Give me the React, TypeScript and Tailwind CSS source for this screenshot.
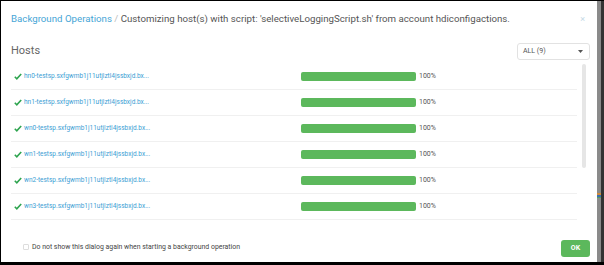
const HOSTS = [
  'hn0-testsp.sxfgwmb1j11utjlztl4jssbxjd.bx...',
  'hn1-testsp.sxfgwmb1j11utjlztl4jssbxjd.bx...',
  'wn0-testsp.sxfgwmb1j11utjlztl4jssbxjd.bx...',
  'wn1-testsp.sxfgwmb1j11utjlztl4jssbxjd.bx...',
  'wn2-testsp.sxfgwmb1j11utjlztl4jssbxjd.bx...',
  'wn3-testsp.sxfgwmb1j11utjlztl4jssbxjd.bx...',
]

function Check() {
  return (
    <svg width="8" height="7" viewBox="0 0 8 7" className="shrink-0">
      <path d="M0.8 3.8 L2.8 5.8 L7.2 1" fill="none" stroke="#2ea44f" strokeWidth="1.6" />
    </svg>
  )
}

function HostRow({ name }: { name: string }) {
  return (
    <div className="h-[26px] flex items-center border-b border-[#f0f0f0]">
      <div className="w-[290px] flex items-center gap-[2px] pl-[3px]">
        <Check />
        <span className="text-[6.5px] text-[#3b9ed4]">{name}</span>
      </div>
      <div className="w-[115px] h-[9px] rounded-[2px] bg-[#5cb85c]" />
      <span className="ml-[3px] text-[7px] text-[#555]">100%</span>
    </div>
  )
}

export default function App() {
  return (
    <div className="w-[604px] h-[265px] bg-black pt-[1px] pl-[1px] pb-[3px] flex font-['Roboto',sans-serif]">
      <div className="flex-1 bg-white flex flex-col pl-[10px] pr-[7px]">
        {/* header */}
        <div className="h-[37px] flex items-center justify-between">
          <div className="text-[9.7px] whitespace-nowrap">
            <span className="text-[#45a5d6]">Background Operations</span>
            <span className="text-[#bbb]"> / </span>
            <span className="text-[#555]">Customizing host(s) with script: 'selectiveLoggingScript.sh' from account hdiconfigactions.</span>
          </div>
          <span className="text-[9px] text-[#c5d9e6] mr-[5px]">×</span>
        </div>

        {/* hosts + filter */}
        <div className="h-[26px] flex items-center justify-between pt-[1px]">
          <span className="text-[11px] text-[#666]">Hosts</span>
          <div className="w-[73px] h-[17px] border border-[#e2e2e2] rounded-[3px] flex items-center justify-between pl-[5px] pr-[6px]">
            <span className="text-[7px] text-[#555]">ALL (9)</span>
            <svg width="5" height="3" viewBox="0 0 5 3">
              <path d="M0 0 L5 0 L2.5 3 Z" fill="#555" />
            </svg>
          </div>
        </div>

        {/* list */}
        <div className="flex">
          <div className="flex-1 flex flex-col">
            {HOSTS.map(h => <HostRow key={h} name={h} />)}
          </div>
          <div className="w-[13px] flex justify-center">
            <div className="w-[4px] h-[104px] rounded-full bg-[#e6e6e6]" />
          </div>
        </div>

        {/* footer */}
        <div className="flex-1 flex items-end justify-between pb-[5px]">
          <div className="flex items-center gap-[3px] pl-[12px] pb-[5px]">
            <div className="w-[6px] h-[6px] border border-[#ddd] rounded-[1px]" />
            <span className="text-[6.9px] text-[#444]">Do not show this dialog again when starting a background operation</span>
          </div>
          <button className="w-[29px] h-[17px] rounded-[3px] bg-[#5cb85c] text-white text-[7px] font-bold">OK</button>
        </div>
      </div>
      <div className="w-[7px] flex">
        <div className="w-[4px] bg-[#8a8a8a] flex flex-col">
          <div className="h-[192px]" />
          <div className="h-[2px] bg-[#d08a3a]" />
          <div className="h-[2px] bg-[#3a6fb0]" />
          <div className="h-[1px] bg-[#5a9a5a]" />
        </div>
        <div className="w-[3px] bg-[#333]" />
      </div>
    </div>
  )
}
